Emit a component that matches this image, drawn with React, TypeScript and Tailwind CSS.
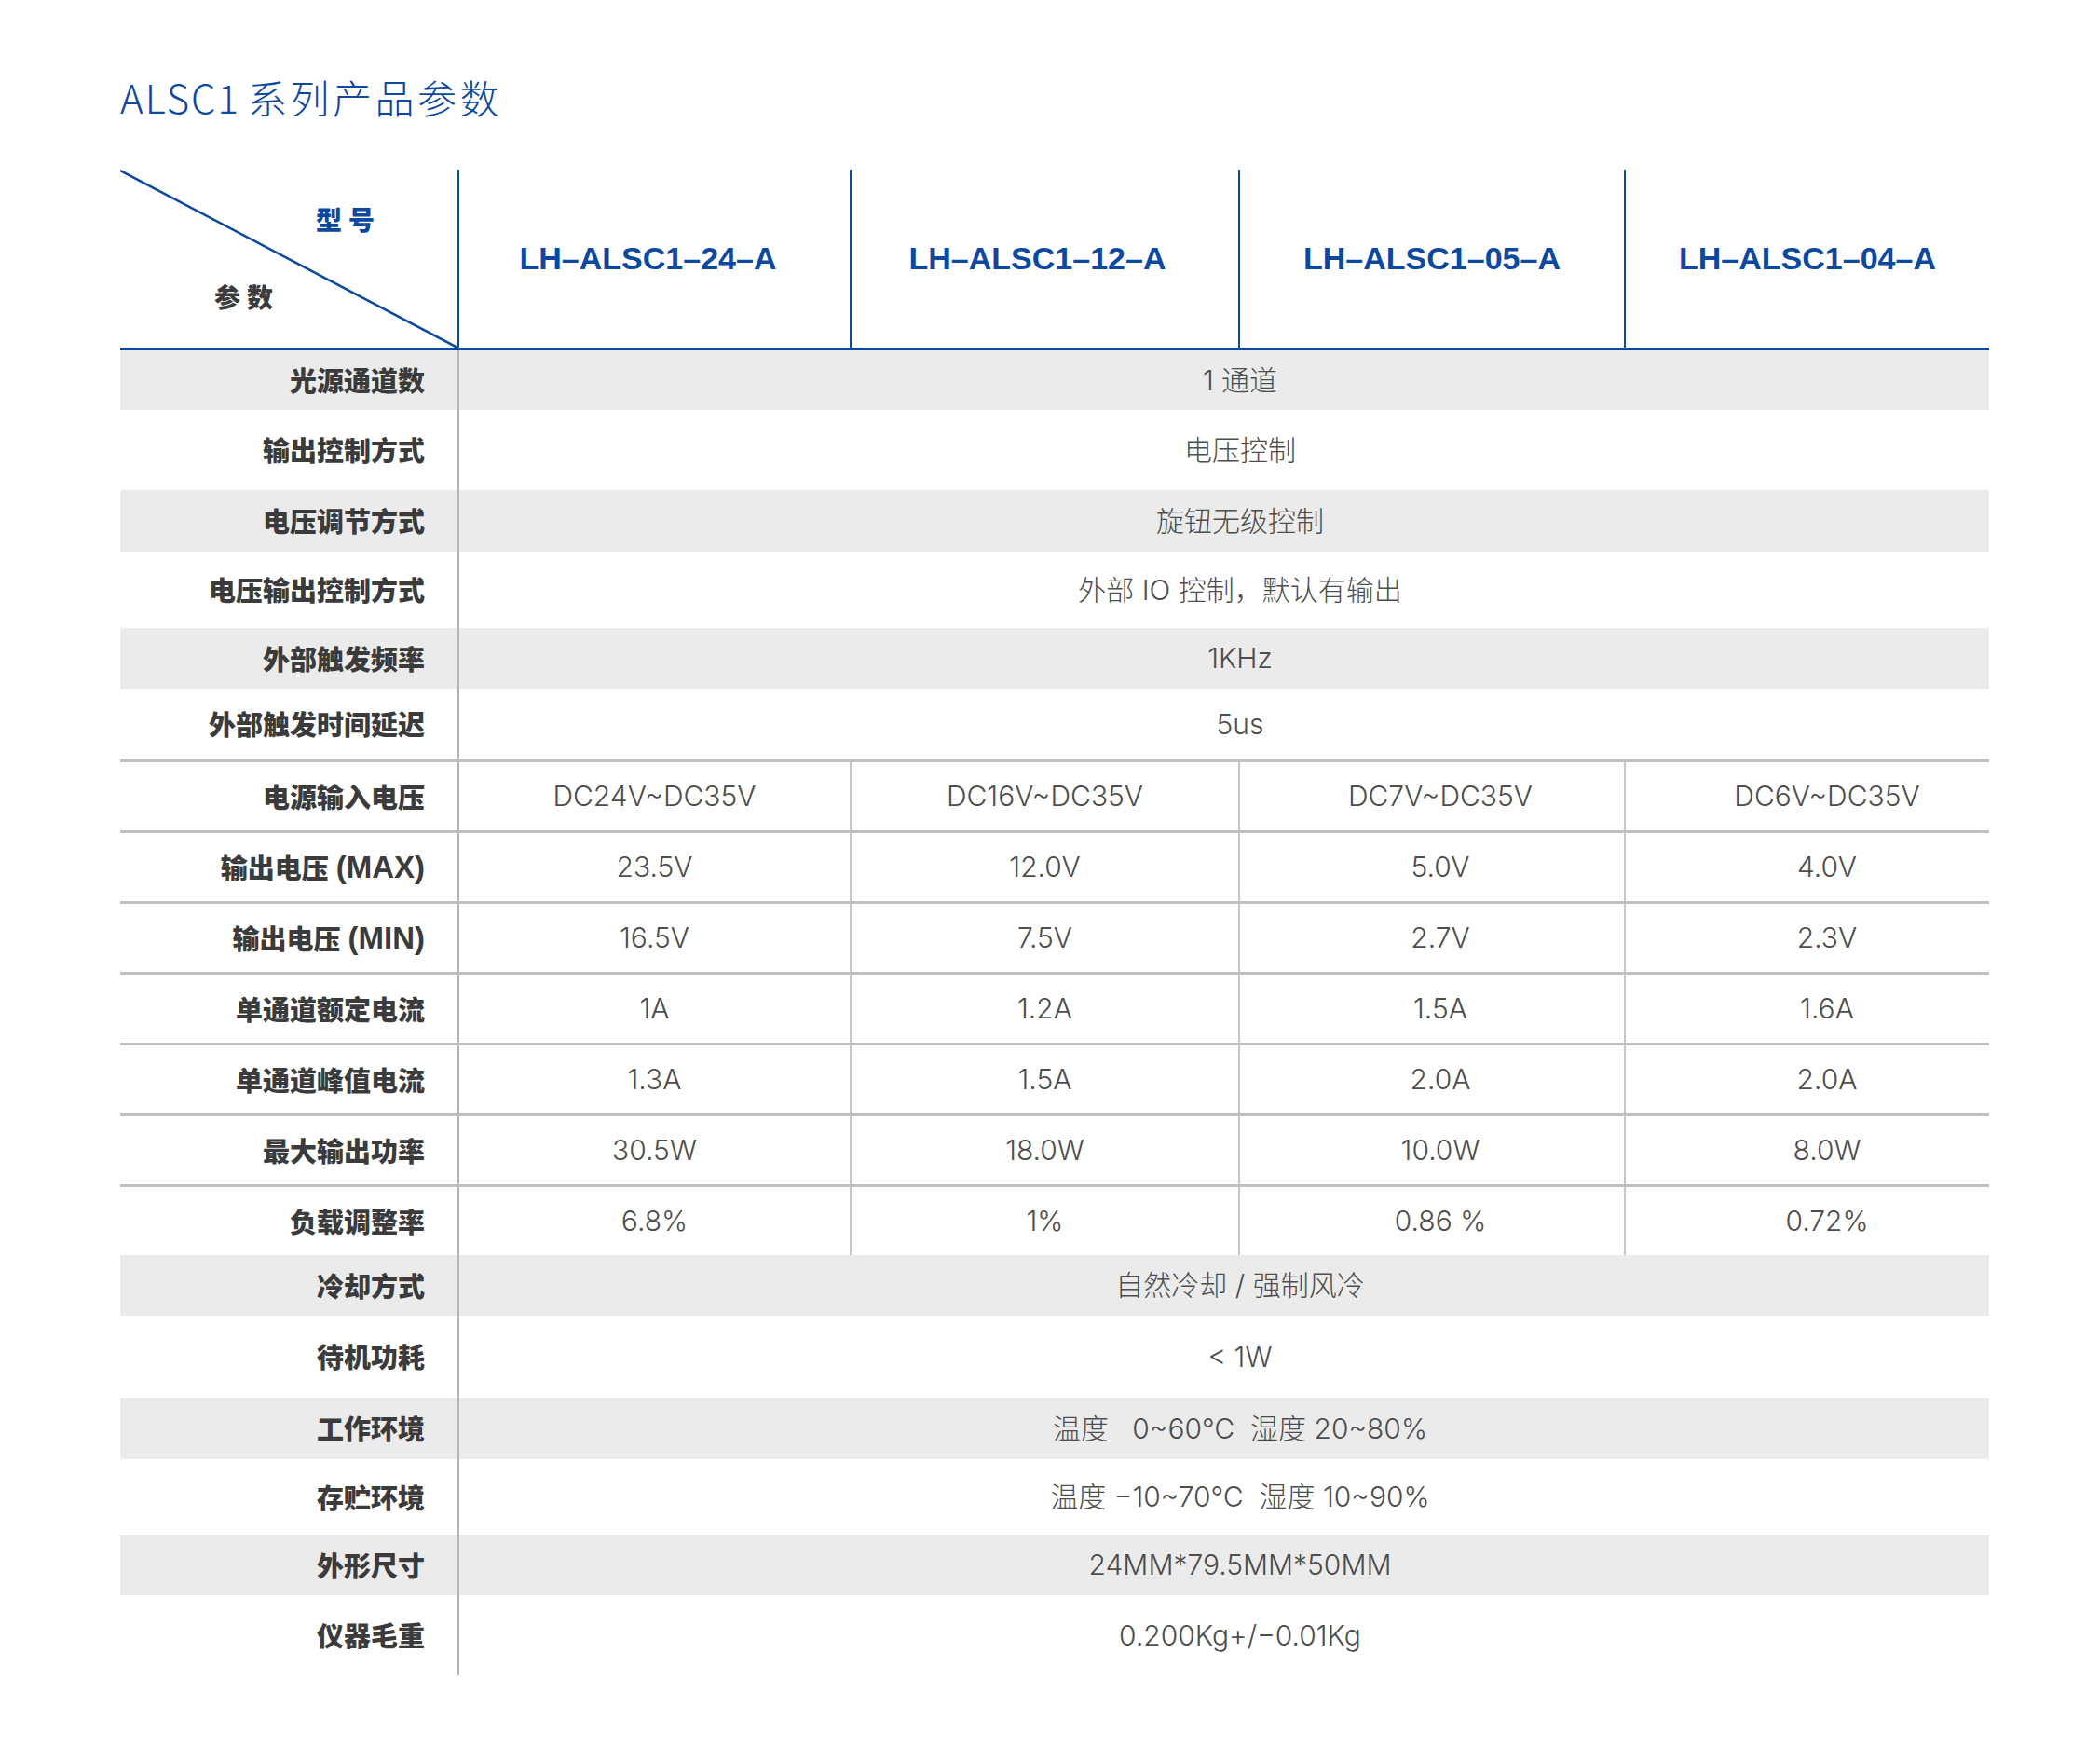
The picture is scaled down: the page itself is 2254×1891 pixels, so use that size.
import React from "react"

type MergedRow = {
    label: string
    value: string
    gray: boolean
    height: string
}

type SplitRow = {
    label: string
    unit?: string
    values: string[]
}

const topRows: MergedRow[] = [
    { label: "光源通道数", value: "1 通道", gray: true, height: "h-[64px]" },
    { label: "输出控制方式", value: "电压控制", gray: false, height: "h-[86px]" },
    { label: "电压调节方式", value: "旋钮无级控制", gray: true, height: "h-[66px]" },
    { label: "电压输出控制方式", value: "外部 IO 控制，默认有输出", gray: false, height: "h-[82px]" },
    { label: "外部触发频率", value: "1KHz", gray: true, height: "h-[65px]" },
    { label: "外部触发时间延迟", value: "5us", gray: false, height: "h-[76px]" },
]

const splitRows: SplitRow[] = [
    { label: "电源输入电压", values: ["DC24V~DC35V", "DC16V~DC35V", "DC7V~DC35V", "DC6V~DC35V"] },
    { label: "输出电压", unit: "(MAX)", values: ["23.5V", "12.0V", "5.0V", "4.0V"] },
    { label: "输出电压", unit: "(MIN)", values: ["16.5V", "7.5V", "2.7V", "2.3V"] },
    { label: "单通道额定电流", values: ["1A", "1.2A", "1.5A", "1.6A"] },
    { label: "单通道峰值电流", values: ["1.3A", "1.5A", "2.0A", "2.0A"] },
    { label: "最大输出功率", values: ["30.5W", "18.0W", "10.0W", "8.0W"] },
    { label: "负载调整率", values: ["6.8%", "1%", "0.86 %", "0.72%"] },
]

const bottomRows: MergedRow[] = [
    { label: "冷却方式", value: "自然冷却 / 强制风冷", gray: true, height: "h-[65px]" },
    { label: "待机功耗", value: "< 1W", gray: false, height: "h-[88px]" },
    { label: "工作环境", value: "温度   0~60℃  湿度 20~80%", gray: true, height: "h-[66px]" },
    { label: "存贮环境", value: "温度 −10~70℃  湿度 10~90%", gray: false, height: "h-[81px]" },
    { label: "外形尺寸", value: "24MM*79.5MM*50MM", gray: true, height: "h-[65px]" },
    { label: "仪器毛重", value: "0.200Kg+/−0.01Kg", gray: false, height: "h-[86px]" },
]

const models = [
    { name: "LH–ALSC1–24–A", nudge: "pr-[14px]" },
    { name: "LH–ALSC1–12–A", nudge: "pr-[16px]" },
    { name: "LH–ALSC1–05–A", nudge: "" },
    { name: "LH–ALSC1–04–A", nudge: "" },
]

// small per-column nudges so values sit where the original puts them
const valueOffsets = ["", "", "pl-[18px]", "pl-[42px]"]

const labelCls =
    "flex items-center justify-end pr-[35px] text-[29px] font-black text-[#3b3b3b] font-['Noto_Sans_CJK_SC',sans-serif] whitespace-nowrap"
const valueCls =
    "flex items-center justify-center text-[30px] font-light text-[#4d4d4d] font-[Inter,'Noto_Sans_CJK_SC',sans-serif] whitespace-pre"

function Merged({ row }: { row: MergedRow }) {
    return (
        <div className={`grid grid-cols-[362px_1644px] ${row.height} ${row.gray ? "bg-[#ebebeb]" : "bg-white"}`}>
            <div className={labelCls}>{row.label}</div>
            <div className={`${valueCls} border-l-2 border-[#b4b4b4] pl-[34px]`}>{row.value}</div>
        </div>
    )
}

function Split({ row }: { row: SplitRow }) {
    return (
        <div className="grid grid-cols-[362px_421px_417px_414px_392px] h-[76px] border-t-[3px] border-[#c0c0c0]">
            <div className={labelCls}>
                {row.label}
                {row.unit && (
                    <span className="ml-[8px] text-[33px] font-bold font-['Liberation_Sans',sans-serif]">{row.unit}</span>
                )}
            </div>
            {row.values.map((v, i) => (
                <div
                    key={i}
                    className={`${valueCls} ${valueOffsets[i]} ${i === 0 ? "border-l-2 border-[#b4b4b4]" : "border-l-2 border-[#c6c6c6]"}`}
                >
                    {v}
                </div>
            ))}
        </div>
    )
}

export default function App() {
    return (
        <div className="w-[2254px] h-[1891px] bg-white pt-[81px] pl-[129px]">
            <h1 className="h-[46px] text-[42px] leading-[46px] font-light tracking-[2px] text-[#0c48a0] font-['Noto_Sans_CJK_SC',sans-serif]">
                ALSC1<span className="ml-[8px] tracking-[3.5px]">系列产品参数</span>
            </h1>

            <div className="mt-[55px] w-[2006px]">
                {/* header */}
                <div className="grid grid-cols-[362px_421px_417px_414px_392px] h-[194px] border-b-[3px] border-[#0c48a0]">
                    <div className="relative flex flex-col">
                        <svg className="absolute inset-0 w-full h-full" viewBox="0 0 362 191" preserveAspectRatio="none">
                            <line x1="0" y1="1" x2="362" y2="191" stroke="#0c48a0" strokeWidth="2.5" />
                        </svg>
                        <div className="pt-[39px] pl-[210px] text-[28px] leading-[28px] font-black tracking-[7px] text-[#0c48a0] font-['Noto_Sans_CJK_SC',sans-serif]">
                            型号
                        </div>
                        <div className="mt-[55px] pl-[101px] text-[28px] leading-[28px] font-black tracking-[7px] text-[#3b3b3b] font-['Noto_Sans_CJK_SC',sans-serif]">
                            参数
                        </div>
                    </div>
                    {models.map((m) => (
                        <div
                            key={m.name}
                            className={`flex items-center justify-center border-l-2 border-[#0c48a0] text-[34px] font-bold text-[#0c48a0] font-['Liberation_Sans',sans-serif] ${m.nudge}`}
                        >
                            {m.name}
                        </div>
                    ))}
                </div>

                {topRows.map((r) => (
                    <Merged key={r.label} row={r} />
                ))}
                {splitRows.map((r) => (
                    <Split key={r.label + (r.unit ?? "")} row={r} />
                ))}
                {bottomRows.map((r) => (
                    <Merged key={r.label} row={r} />
                ))}
            </div>
        </div>
    )
}
